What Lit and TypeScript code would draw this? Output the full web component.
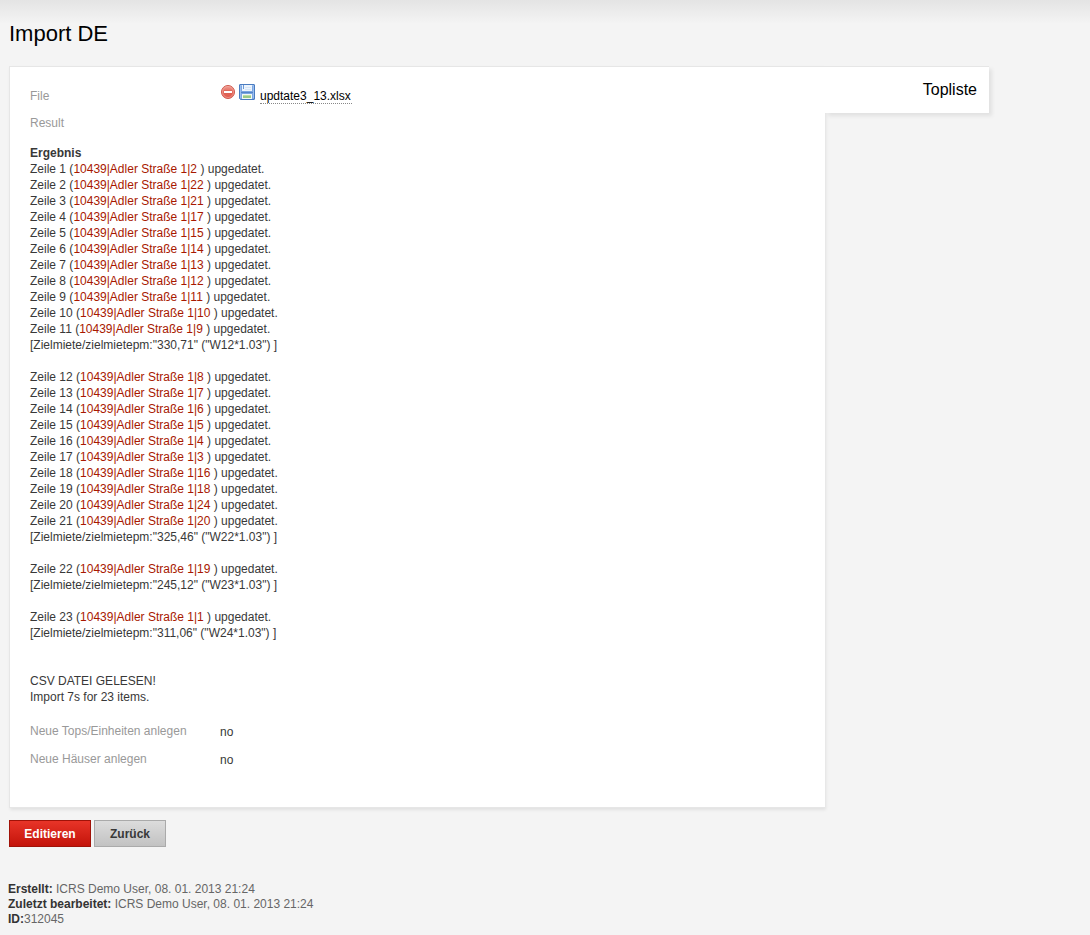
import { LitElement, html, css, svg } from "lit";
import { customElement } from "lit/decorators.js";

interface ResultRow {
  unit: number;
  note?: string;
}

const ROWS: ResultRow[] = [
  { unit: 2 }, { unit: 22 }, { unit: 21 }, { unit: 17 }, { unit: 15 }, { unit: 14 },
  { unit: 13 }, { unit: 12 }, { unit: 11 }, { unit: 10 },
  { unit: 9, note: '"330,71" ("W12*1.03")' },
  { unit: 8 }, { unit: 7 }, { unit: 6 }, { unit: 5 }, { unit: 4 }, { unit: 3 },
  { unit: 16 }, { unit: 18 }, { unit: 24 },
  { unit: 20, note: '"325,46" ("W22*1.03")' },
  { unit: 19, note: '"245,12" ("W23*1.03")' },
  { unit: 1, note: '"311,06" ("W24*1.03")' },
];

const removeIcon = svg`
  <svg width="16" height="16" viewBox="0 0 16 16" aria-hidden="true">
    <defs>
      <linearGradient id="red" x1="0" y1="0" x2="0" y2="1">
        <stop offset="0" stop-color="#f0a096"/>
        <stop offset="0.5" stop-color="#e4665a"/>
        <stop offset="1" stop-color="#e05a4c"/>
      </linearGradient>
    </defs>
    <circle cx="8" cy="8" r="6.5" fill="url(#red)" stroke="#d0584c"/>
    <circle cx="8" cy="8" r="5.5" fill="none" stroke="#f4b0a8" stroke-opacity="0.6"/>
    <rect x="4" y="7" width="8" height="2" fill="#fff"/>
    <path d="M4 6.500h8M4 9.500h8" stroke="#d4604f" stroke-opacity="0.5"/>
  </svg>`;

const saveIcon = svg`
  <svg width="16" height="16" viewBox="0 0 16 16" aria-hidden="true">
    <path d="M1 .5h14a.5.5 0 0 1 .5.5v14a.5.5 0 0 1-.5.5H1.5l-1-1V1A.5.5 0 0 1 1 .5z" fill="#7ba6e2" stroke="#4a7cc0"/>
    <path d="M1.5 14V1.500H14.500V14" fill="none" stroke="#9cbfee"/>
    <rect x="3" y="1" width="10" height="6" fill="#edf4fc"/>
    <rect x="4" y="1" width="1" height="4" fill="#6a98d6"/>
    <path d="M6 3.500h6M6 5.500h6" stroke="#d5e5f7"/>
    <path d="M2 8.500h12" stroke="#5585c8"/>
    <rect x="3" y="10" width="10" height="5" fill="#f4f9f1"/>
    <rect x="4" y="11" width="8" height="1" fill="#b9dca9"/>
    <rect x="4" y="12" width="8" height="2" fill="#9acb84"/>
  </svg>`;

@customElement("app-root")
export class AppRoot extends LitElement {
  static styles = css`
    :host {
      display: block;
      box-sizing: border-box;
      min-height: 100vh;
      padding: 21px 9px 7px;
      background: linear-gradient(#e4e4e4, #f4f4f4 24px) #f4f4f4;
      color: #383838;
      font: 12px/16px "Liberation Sans", Arial, sans-serif;
    }
    h1 {
      margin: 0 0 19px;
      color: #000;
      font-size: 22px;
      font-weight: 400;
      line-height: 26px;
    }
    a {
      color: #a81800;
      text-decoration: none;
    }
    .layout {
      display: flex;
      align-items: flex-start;
      max-width: 980px;
    }
    .panel {
      flex: 1;
      min-width: 0;
      padding: 21px 20px 28px;
      border: 1px solid #e6e6e6;
      border-right: 0;
      background: #fff;
      box-shadow: 1px 2px 3px rgba(0, 0, 0, 0.08);
    }
    .tabs {
      position: relative;
      box-sizing: border-box;
      width: 164px;
      padding: 12px;
      border-top: 1px solid #e6e6e6;
      background: #fff;
      box-shadow: 3px 3px 4px rgba(0, 0, 0, 0.08);
      text-align: right;
    }
    .tabs a {
      display: block;
      color: #000;
      font-size: 16px;
      line-height: 22px;
    }
    .field {
      display: grid;
      grid-template-columns: 190px 1fr;
    }
    .label {
      color: #999;
    }
    .file {
      padding-bottom: 11px;
    }
    .icons {
      display: flex;
      gap: 3px;
    }
    .file .value {
      display: flex;
      align-items: flex-start;
      gap: 5px;
    }
    .icon-button {
      display: block;
      width: 16px;
      height: 16px;
      margin: -4px 0 0;
      padding: 0;
      border: 0;
      background: none;
      cursor: pointer;
    }
    .icon-button svg {
      display: block;
    }
    .filename {
      padding: 2px 1px 0 0;
      border-bottom: 1px dotted #888;
      color: #000;
      line-height: 13px;
    }
    .result {
      margin: 14px 0 18px;
    }
    .result h2 {
      margin: 0;
      font-size: 12px;
      line-height: 16px;
    }
    .result p {
      margin: 0;
    }
    .result .note {
      padding-bottom: 16px;
    }
    .result .summary {
      padding-top: 16px;
    }
    .flag {
      padding-bottom: 12px;
    }
    .flag .value {
      padding-top: 1px;
      margin-bottom: -1px;
    }
    .actions {
      display: flex;
      gap: 3px;
      margin: 12px 0 35px;
    }
    .button {
      height: 27px;
      padding: 0 14px;
      border: 1px solid #aaa;
      background: linear-gradient(#dcdcdc, #c2c2c2);
      color: #383838;
      font: bold 12px/16px "Liberation Sans", Arial, sans-serif;
      min-width: 72px;
      cursor: pointer;
    }
    .primary {
      min-width: 82px;
      border-color: #a01208;
      background: linear-gradient(#e83428, #c3140a);
      color: #fff;
    }
    .meta {
      margin-left: -1px;
      color: #666;
      line-height: 15px;
    }
    .meta b {
      color: #333;
    }
  `;

  private renderRow(row: ResultRow, index: number) {
    return html`
      <p>Zeile ${index + 1} (<a href="#unit-${row.unit}">10439|Adler Straße 1|${row.unit}</a> ) upgedatet.</p>
      ${row.note ? html`<p class="note">[Zielmiete/zielmietepm:${row.note} ]</p>` : null}
    `;
  }

  private renderFlag(label: string, value: string) {
    return html`<div class="field flag"><span class="label">${label}</span><span class="value">${value}</span></div>`;
  }

  render() {
    return html`
      <h1>Import DE</h1>
      <div class="layout">
        <main class="panel">
          <div class="field file">
            <span class="label">File</span>
            <div class="value">
              <div class="icons">
                <button class="icon-button" type="button" aria-label="Remove file">${removeIcon}</button>
                <button class="icon-button" type="button" aria-label="Save file">${saveIcon}</button>
              </div>
              <a class="filename" href="#file">updtate3_13.xlsx</a>
            </div>
          </div>
          <div class="label">Result</div>
          <section class="result">
            <h2>Ergebnis</h2>
            ${ROWS.map((row, i) => this.renderRow(row, i))}
            <p class="summary">CSV DATEI GELESEN!</p>
            <p>Import 7s for 23 items.</p>
          </section>
          ${this.renderFlag("Neue Tops/Einheiten anlegen", "no")}
          ${this.renderFlag("Neue Häuser anlegen", "no")}
        </main>
        <nav class="tabs"><a href="#topliste">Topliste</a></nav>
      </div>
      <div class="actions">
        <button class="button primary" type="button">Editieren</button>
        <button class="button" type="button">Zurück</button>
      </div>
      <footer class="meta">
        <div><b>Erstellt:</b> ICRS Demo User, 08. 01. 2013 21:24</div>
        <div><b>Zuletzt bearbeitet:</b> ICRS Demo User, 08. 01. 2013 21:24</div>
        <div><b>ID:</b>312045</div>
      </footer>
    `;
  }
}
